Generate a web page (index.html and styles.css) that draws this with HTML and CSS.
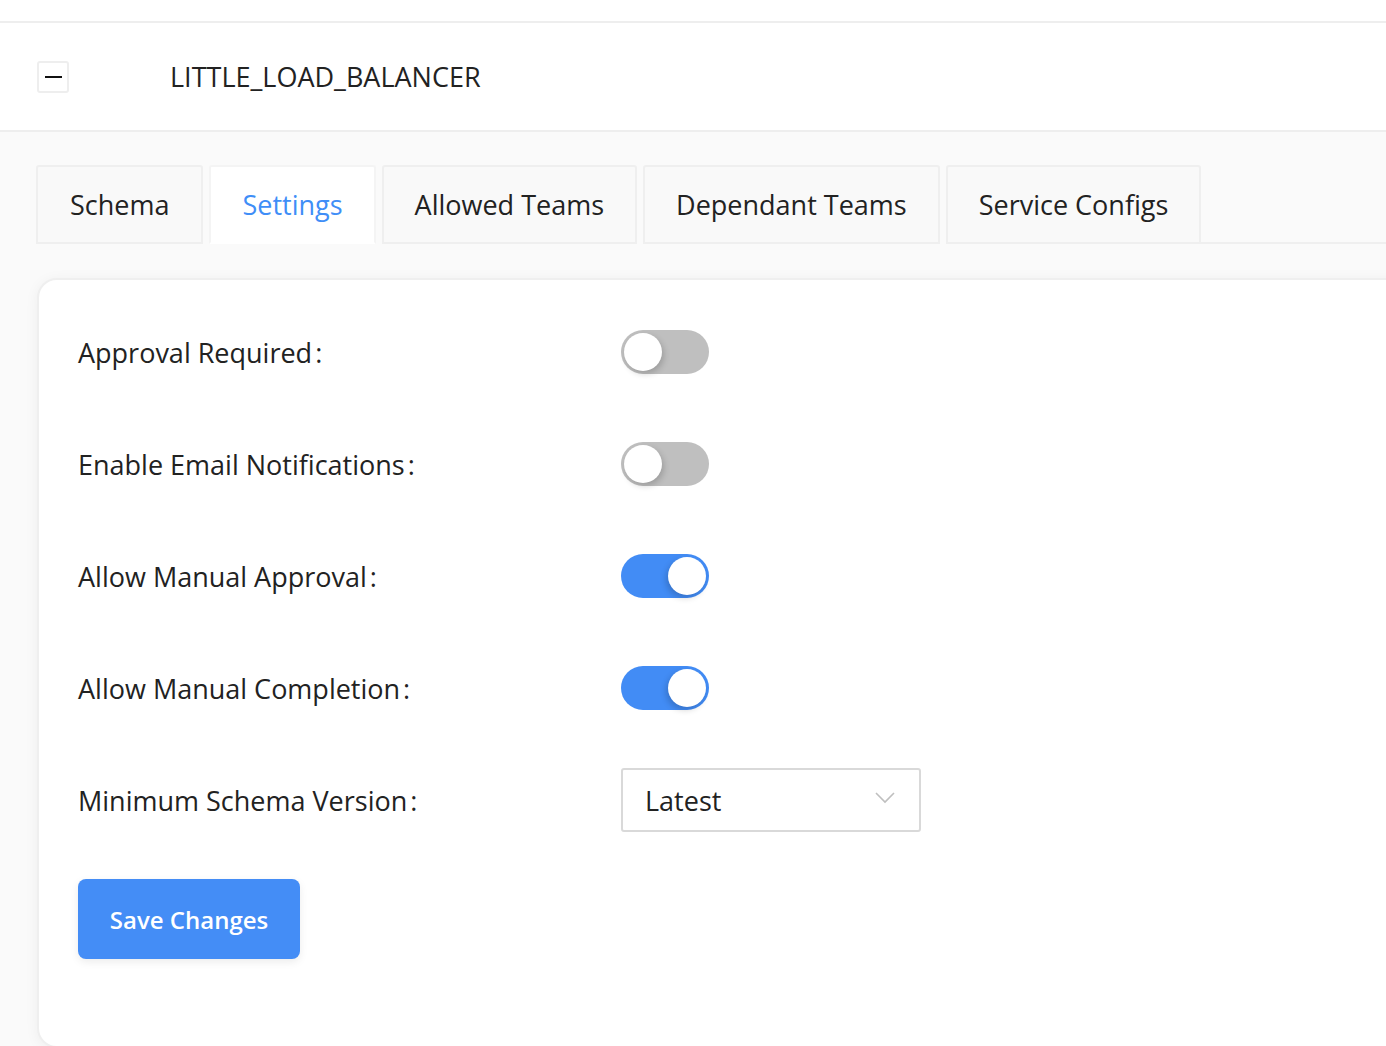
FILE: index.html
```html
<!DOCTYPE html>
<html>
<head>
<meta charset="utf-8">
<link rel="stylesheet" href="styles.css">
</head>
<body>
<div class="top-strip"></div>
<header class="header">
  <button class="collapse" aria-label="collapse"><span class="minus"></span></button>
  <h1 class="title">LITTLE_LOAD_BALANCER</h1>
</header>
<main class="main">
  <nav class="tabs">
    <div class="tab">Schema</div>
    <div class="tab active">Settings</div>
    <div class="tab">Allowed Teams</div>
    <div class="tab">Dependant Teams</div>
    <div class="tab">Service Configs</div>
    <div class="tab-rest"></div>
  </nav>
  <section class="card">
    <div class="row">
      <div class="label">Approval Required<span class="colon">:</span></div>
      <div class="toggle"><span class="knob"></span></div>
    </div>
    <div class="row">
      <div class="label">Enable Email Notifications<span class="colon">:</span></div>
      <div class="toggle"><span class="knob"></span></div>
    </div>
    <div class="row">
      <div class="label">Allow Manual Approval<span class="colon">:</span></div>
      <div class="toggle on"><span class="knob"></span></div>
    </div>
    <div class="row">
      <div class="label">Allow Manual Completion<span class="colon">:</span></div>
      <div class="toggle on"><span class="knob"></span></div>
    </div>
    <div class="row">
      <div class="label">Minimum Schema Version<span class="colon">:</span></div>
      <div class="select">
        <span class="select-value">Latest</span>
        <svg class="chevron" width="20" height="12" viewBox="0 0 20 12"><path d="M1 1 L10 10 L19 1" fill="none" stroke="#bfbfbf" stroke-width="1.6"/></svg>
      </div>
    </div>
    <button class="save">Save Changes</button>
  </section>
</main>
</body>
</html>
```

FILE: styles.css
```css
* { box-sizing: border-box; }
html, body { margin: 0; padding: 0; }
body {
  background: #fafafa;
  font-family: "Open Sans", "Noto Sans", sans-serif;
  color: #222;
  overflow: hidden;
  height: 1046px;
}
.top-strip {
  height: 21px;
  background: #fff;
}
.header {
  height: 111px;
  background: #fff;
  border-top: 2px solid #eeeeee;
  border-bottom: 2px solid #eeeeee;
  display: flex;
  align-items: center;
  padding-left: 37px;
}
.collapse {
  width: 32px;
  height: 32px;
  border: 2px solid #eeeeee;
  border-radius: 3px;
  background: #fff;
  padding: 0;
  display: flex;
  align-items: center;
  justify-content: center;
  margin-top: 1px;
}
.minus {
  width: 17px;
  height: 2px;
  background: #111;
  display: block;
}
.title {
  margin: 0 0 0 101px;
  font-size: 27px;
  font-weight: 400;
  color: #222;
}
.main {
  padding: 33px 0 0 36px;
}
.tabs {
  display: flex;
  height: 79px;
  align-items: stretch;
}
.tab {
  border: 2px solid #efefef;
  border-radius: 3px 3px 0 0;
  background: #f9f9f9;
  font-size: 27px;
  color: #222;
  padding: 0 31px;
  display: flex;
  align-items: center;
  margin-right: 6px;
}
.tab:first-child {
  padding: 0 32px;
}
.tab.active {
  background: #fff;
  color: #3f8ef7;
  border-color: #f4f4f4;
  border-bottom-color: #fff;
}
.tab-rest {
  flex: 1;
  border-bottom: 2px solid #efefef;
  margin-left: -6px;
}
.card {
  margin-top: 34px;
  margin-left: 1px;
  margin-right: -60px;
  height: 770px;
  background: #fff;
  border: 2px solid #efefef;
  border-radius: 20px;
  box-shadow: 0 2px 14px rgba(0, 0, 0, 0.05);
  padding: 40px 0 0 39px;
}
.row {
  display: flex;
  align-items: center;
  height: 64px;
  margin-bottom: 48px;
}
.label {
  width: 543px;
  font-size: 27px;
  color: #222;
}
.colon {
  margin-left: 3px;
}
.toggle {
  position: relative;
  width: 88px;
  height: 44px;
  border-radius: 22px;
  background: #bfbfbf;
}
.toggle .knob {
  position: absolute;
  top: 3px;
  left: 3px;
  width: 38px;
  height: 38px;
  border-radius: 50%;
  background: #fff;
  box-shadow: 2px 3px 6px rgba(0, 0, 0, 0.18);
}
.toggle.on {
  background: #428cf5;
}
.toggle.on .knob {
  left: 47px;
  box-shadow: -2px 3px 6px rgba(0, 0, 0, 0.18);
}
.select {
  width: 300px;
  height: 64px;
  border: 2px solid #d9d9d9;
  border-radius: 3px;
  background: #fff;
  display: flex;
  align-items: center;
  justify-content: space-between;
  padding: 0 24px 0 22px;
}
.select-value {
  font-size: 27px;
  color: #222;
}
.chevron {
  display: block;
  margin-top: -4px;
}
.save {
  margin-top: -1px;
  width: 222px;
  height: 80px;
  border: none;
  border-radius: 8px;
  background: #448df6;
  color: #fff;
  font-family: "Open Sans", "Noto Sans", sans-serif;
  font-weight: 600;
  font-size: 24px;
  box-shadow: 0 3px 8px rgba(0, 0, 0, 0.08);
}
```
